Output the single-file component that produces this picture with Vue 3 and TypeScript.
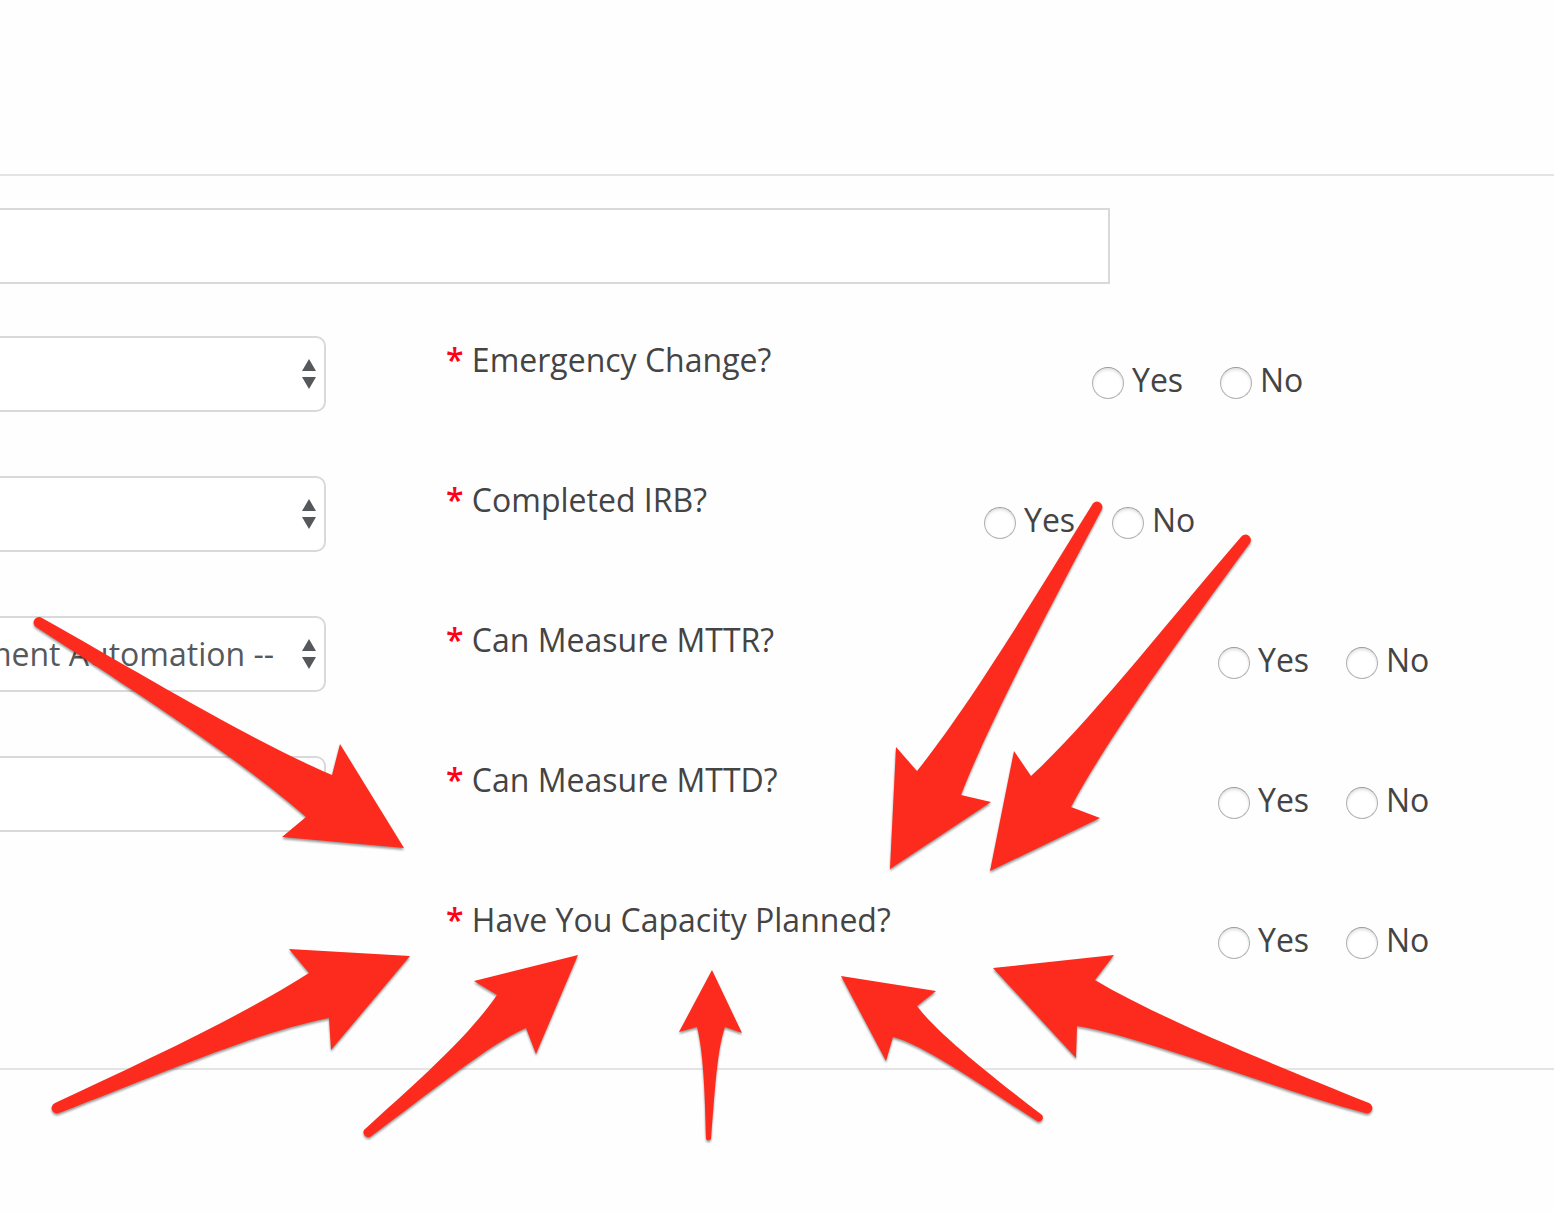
<script setup lang="ts">
interface Question {
  id: string
  label: string
  width: 'medium' | 'narrow' | 'wide'
}

const questions: Question[] = [
  { id: 'emergency', label: 'Emergency Change?', width: 'medium' },
  { id: 'irb', label: 'Completed IRB?', width: 'narrow' },
  { id: 'mttr', label: 'Can Measure MTTR?', width: 'wide' },
  { id: 'mttd', label: 'Can Measure MTTD?', width: 'wide' },
  { id: 'capacity', label: 'Have You Capacity Planned?', width: 'wide' },
]

const selects: string[] = ['', '', '-- Select Deployment Automation --', '']

const arrows: string[] = [
  'M42 618 C140 673 250 740 332 775 L340 744 L404 848 L282 837 L306 817 C250 767 150 701 36 627 A5 5 0 0 1 42 618 Z',
  'M1092 505 C1033 600 970 705 917 771 L896 747 L890 869 L991 802 L961 795 C985 733 1030 645 1102 509 A5 5 0 0 0 1092 505 Z',
  'M1241 537 C1170 619 1090 722 1031 776 L1014 751 L990 871 L1100 818 L1071 807 C1100 752 1160 665 1250 543 A5 5 0 0 0 1241 537 Z',
  'M55 1103 C140 1063 235 1020 309 973 L289 949 L410 956 L331 1050 L329 1018 C255 1033 170 1070 59 1113 A5 5 0 0 1 55 1103 Z',
  'M364 1130 C412 1086 466 1040 497 995 L474 981 L578 955 L536 1054 L526 1028 C490 1044 440 1085 370 1137 A5 5 0 0 1 364 1130 Z',
  'M706 1139 C705 1090 703 1050 697 1027 L679 1032 L712 970 L742 1033 L725 1027 C717 1050 715 1090 711 1139 A3 3 0 0 1 706 1139 Z',
  'M1042 1115 C990 1075 937 1033 917 1006 L936 991 L841 976 L886 1061 L893 1037 C925 1045 985 1088 1037 1121 A4 4 0 0 0 1042 1115 Z',
  'M1369 1103 C1280 1067 1160 1019 1095 980 L1114 955 L993 968 L1076 1058 L1077 1026 C1140 1036 1270 1087 1365 1113 A5 5 0 0 0 1369 1103 Z',
]
</script>

<template>
  <main class="page">
    <form class="panel" @submit.prevent>
      <input class="title-field" type="text" aria-label="Title" />
      <div class="columns">
        <div class="left">
          <div v-for="(text, i) in selects" :key="i" class="select-wrap">
            <select :aria-label="'Option ' + (i + 1)">
              <option>{{ text }}</option>
            </select>
            <svg class="stepper" width="14" height="30" viewBox="0 0 14 30" aria-hidden="true">
              <path d="M7 0 L14 12 H0 Z M0 18 H14 L7 30 Z" />
            </svg>
          </div>
        </div>
        <div class="right">
          <div v-for="q in questions" :key="q.id" class="question" role="radiogroup" :aria-labelledby="q.id">
            <div :id="q.id" class="label" :class="q.width"><span class="star">*</span> {{ q.label }}</div>
            <div class="answers">
              <label><input type="radio" :name="q.id" value="yes" />Yes</label>
              <label><input type="radio" :name="q.id" value="no" />No</label>
            </div>
          </div>
        </div>
      </div>
    </form>
    <svg class="arrows" aria-hidden="true">
      <path v-for="(d, i) in arrows" :key="i" :d="d" />
    </svg>
  </main>
</template>

<style>
body {
  margin: 0;
  background: #fefefe;
}
</style>

<style scoped>
.page {
  position: relative;
  min-height: 100vh;
  box-sizing: border-box;
  padding-top: 174px;
  overflow: hidden;
  font-family: "Open Sans", sans-serif;
  font-size: 32px;
  line-height: 44px;
  color: #444;
}
.panel {
  border-top: 2px solid #e4e4e4;
  border-bottom: 2px solid #e4e4e4;
  padding: 32px 0 0;
}
.title-field {
  display: block;
  box-sizing: border-box;
  width: 1150px;
  height: 76px;
  margin: 0 0 52px -40px;
  padding: 0 16px;
  border: 2px solid #d9d9d9;
  border-radius: 0;
  background: #fff;
  font: inherit;
}
.columns {
  display: flex;
}
.left {
  flex: 0 0 646px;
  margin-left: -320px;
  display: flex;
  flex-direction: column;
  gap: 64px;
}
.select-wrap {
  position: relative;
  height: 76px;
}
select {
  appearance: none;
  box-sizing: border-box;
  width: 100%;
  height: 76px;
  margin: 0;
  padding: 0 50px 0 16px;
  border: 2px solid #d9d9d9;
  border-radius: 10px;
  background: #fff;
  color: #55595c;
  font: inherit;
  text-align: right;
  text-align-last: right;
}
.stepper {
  position: absolute;
  top: 23px;
  right: 10px;
  fill: #55595c;
}
.right {
  flex: 1;
  padding-left: 120px;
}
.question {
  display: flex;
  height: 140px;
}
.question:last-child {
  height: 172px;
}
.label {
  flex: none;
  box-sizing: border-box;
  padding-top: 2px;
  white-space: nowrap;
}
.medium {
  width: 646px;
}
.narrow {
  width: 538px;
}
.wide {
  width: 772px;
}
.star {
  color: #ff0018;
  font-weight: 600;
}
.answers {
  display: flex;
  padding-top: 22px;
}
.answers label {
  display: flex;
  width: 128px;
  height: 44px;
  white-space: nowrap;
}
input[type="radio"] {
  appearance: none;
  box-sizing: border-box;
  flex: none;
  width: 32px;
  height: 32px;
  margin: 9px 8px 0 0;
  border: 1px solid #b2b2b2;
  border-top-color: #9a9a9a;
  border-radius: 50%;
  background: #fff;
  box-shadow: inset 0 2px 3px rgba(0, 0, 0, 0.12);
}
.arrows {
  position: absolute;
  top: 0;
  left: 0;
  width: 100%;
  height: 100%;
  overflow: visible;
  pointer-events: none;
  fill: #fd2b1d;
  filter: drop-shadow(0 2px 1px rgba(0, 0, 0, 0.4));
}
</style>
